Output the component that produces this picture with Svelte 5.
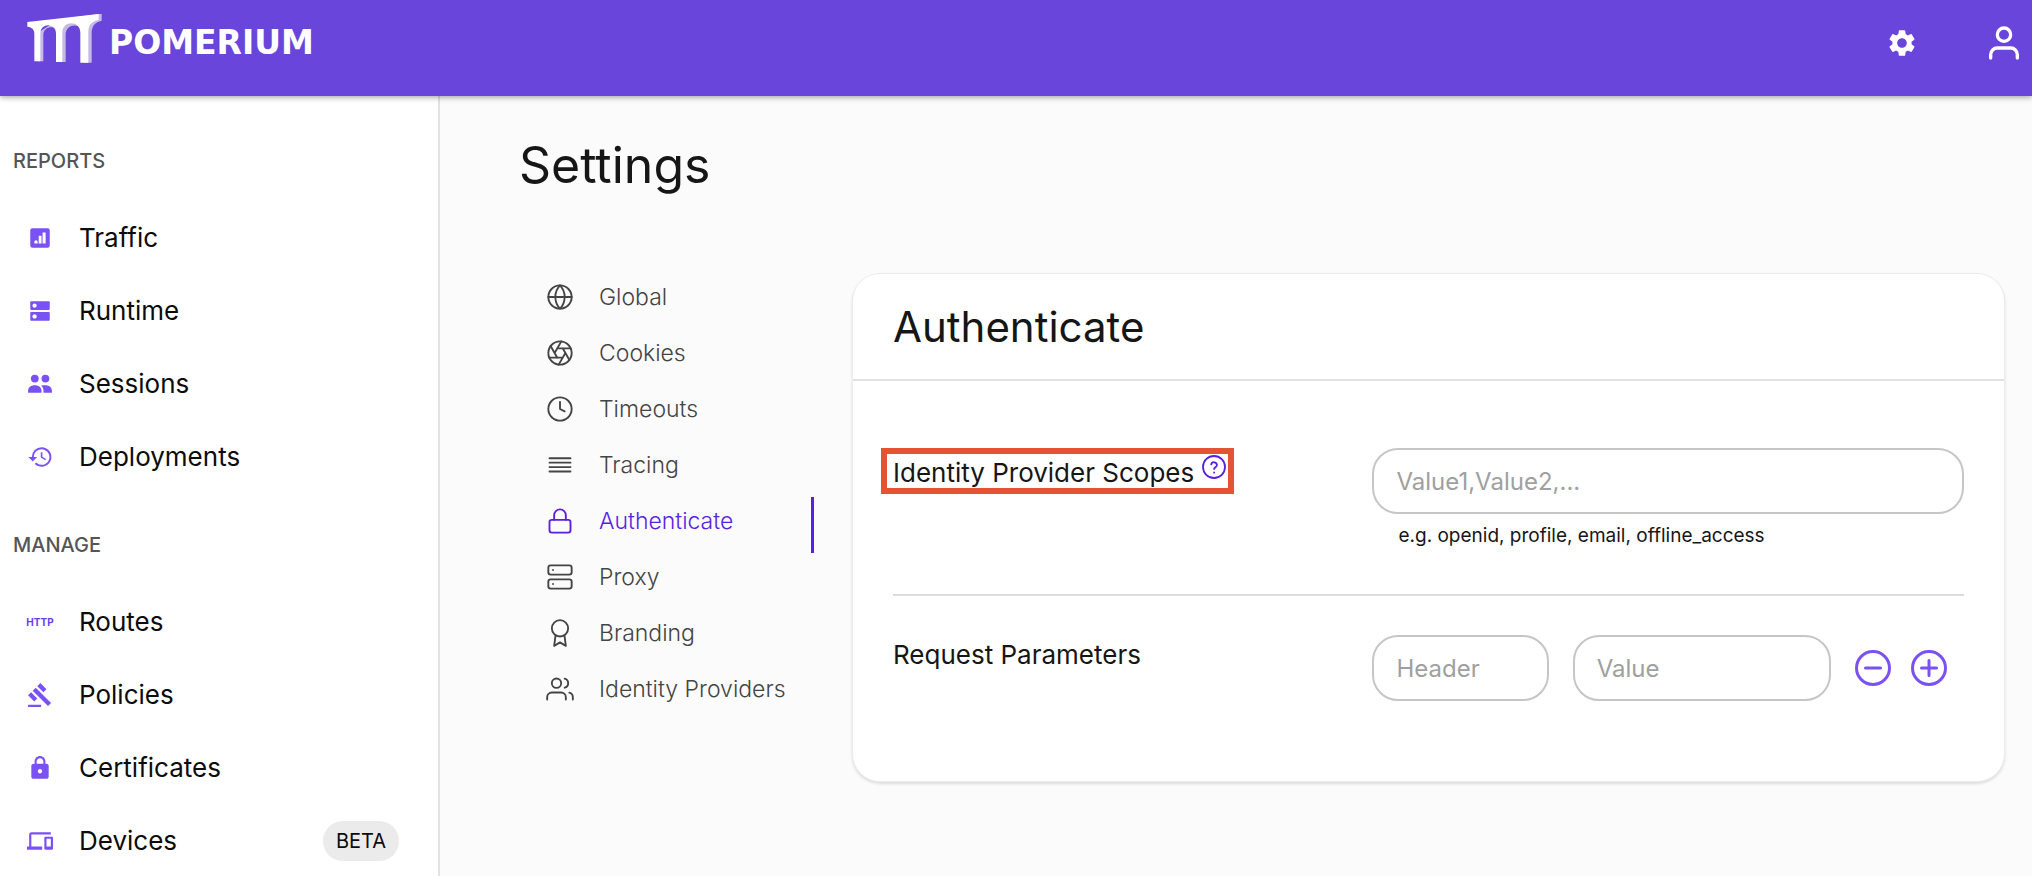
<script>
  const sections = [
    {
      title: 'REPORTS',
      items: [
        { label: 'Traffic', icon: 'traffic' },
        { label: 'Runtime', icon: 'runtime' },
        { label: 'Sessions', icon: 'sessions' },
        { label: 'Deployments', icon: 'deployments' }
      ]
    },
    {
      title: 'MANAGE',
      items: [
        { label: 'Routes', icon: 'routes' },
        { label: 'Policies', icon: 'policies' },
        { label: 'Certificates', icon: 'certificates' },
        { label: 'Devices', icon: 'devices', badge: 'BETA' }
      ]
    }
  ];

  const tabs = ['Global', 'Cookies', 'Timeouts', 'Tracing', 'Authenticate', 'Proxy', 'Branding', 'Identity Providers'];
  let active = $state('Authenticate');
  let scopes = $state('');
  let params = $state([{ header: '', value: '' }]);

  const addParam = () => params.push({ header: '', value: '' });
  const removeParam = (i) => {
    if (params.length > 1) params.splice(i, 1);
  };
</script>

{#snippet navIcon(name)}
  {#if name === 'routes'}
    <span class="http" aria-hidden="true">HTTP</span>
  {:else}
    <svg class="nav-icon" viewBox="0 0 24 24" aria-hidden="true">
      {#if name === 'traffic'}
        <path fill-rule="evenodd" d="M5 3h14a2 2 0 0 1 2 2v14a2 2 0 0 1-2 2H5a2 2 0 0 1-2-2V5a2 2 0 0 1 2-2zM8.300 14a1.500 1.500 0 0 0-1.500 1.500V17h3v-1.500A1.500 1.500 0 0 0 8.300 14zM10.800 10v7h2.600v-7zM14.400 7v10h2.800V7z" />
      {:else if name === 'runtime'}
        <path d="M20 13H4c-.55 0-1 .45-1 1v6c0 .55.45 1 1 1h16c.55 0 1-.45 1-1v-6c0-.55-.45-1-1-1zM7 19c-1.100 0-2-.9-2-2s.9-2 2-2 2 .9 2 2-.9 2-2 2zM20 3H4c-.55 0-1 .45-1 1v6c0 .55.45 1 1 1h16c.55 0 1-.45 1-1V4c0-.55-.45-1-1-1zM7 9c-1.100 0-2-.9-2-2s.9-2 2-2 2 .9 2 2-.9 2-2 2z" />
      {:else if name === 'sessions'}
        <circle cx="7.200" cy="7" r="3.600" />
        <circle cx="17" cy="7" r="3.600" />
        <path d="M1 20v-2c0-2.700 2.700-4.800 6.200-4.800s6.200 2.100 6.200 4.800v2zM15.200 20v-2c0-1.900-.9-3.500-2.200-4.600 1.200-.2 2.600-.2 4-.2 3.500 0 6 2.100 6 4.800v2z" />
      {:else if name === 'deployments'}
        <path d="M13.500 3a9 9 0 0 0-9 9H1.200l4 4 .1.150L9.400 12H6.300a7.200 7.200 0 1 1 2.100 5.100l-1.250 1.250A9 9 0 1 0 13.500 3zM12.700 7.500v5l4.200 2.500.7-1.200-3.400-2.050V7.500z" />
      {:else if name === 'policies'}
        <path d="M1 21h12v2H1zM5.245 8.070l2.830-2.827 14.140 14.142-2.828 2.828zM12.317 1l5.657 5.656-2.830 2.830-5.654-5.660zM3.825 9.485l5.657 5.657-2.828 2.828-5.657-5.657z" />
      {:else if name === 'certificates'}
        <path d="M18 8h-1V6c0-2.760-2.240-5-5-5S7 3.240 7 6v2H6c-1.100 0-2 .9-2 2v10c0 1.100.9 2 2 2h12c1.100 0 2-.9 2-2V10c0-1.100-.9-2-2-2zm-6 9c-1.100 0-2-.9-2-2s.9-2 2-2 2 .9 2 2-.9 2-2 2zm3.100-9H8.900V6c0-1.710 1.390-3.100 3.100-3.100s3.100 1.390 3.100 3.100v2z" />
      {:else if name === 'devices'}
        <path d="M4 6h18V4H4c-1.100 0-2 .9-2 2v11H0v3h14v-3H4V6zm19 2h-6c-.55 0-1 .45-1 1v10c0 .55.45 1 1 1h6c.55 0 1-.45 1-1V9c0-.55-.45-1-1-1zm-1 9h-4v-7h4v7z" />
      {/if}
    </svg>
  {/if}
{/snippet}

{#snippet tabIcon(name)}
  <svg class="tab-icon" viewBox="0 0 24 24" aria-hidden="true">
    {#if name === 'Global'}
      <circle cx="12" cy="12" r="10" />
      <path d="M2 12h20M12 2c2.600 2.700 4 6.200 4 10s-1.400 7.300-4 10c-2.600-2.700-4-6.200-4-10s1.400-7.300 4-10z" />
    {:else if name === 'Cookies'}
      <circle cx="12" cy="12" r="10" />
      <path d="M14.310 8l5.740 9.940M9.690 8h11.480M7.380 12l5.740-9.940M9.690 16L3.950 6.060M14.310 16H2.830M16.620 12l-5.740 9.940" />
    {:else if name === 'Timeouts'}
      <circle cx="12" cy="12" r="10" />
      <path d="M12 6v6l4 2" />
    {:else if name === 'Tracing'}
      <path d="M3 6.200h18M3 10h18M3 13.800h18M3 17.600h18" />
    {:else if name === 'Authenticate'}
      <rect x="3" y="11" width="18" height="11" rx="2" />
      <path d="M7 11V7a5 5 0 0 1 10 0v4" />
    {:else if name === 'Proxy'}
      <rect x="2" y="2" width="20" height="8" rx="2" />
      <rect x="2" y="14" width="20" height="8" rx="2" />
      <path d="M6 6h.01M6 18h.01" />
    {:else if name === 'Branding'}
      <circle cx="12" cy="8" r="7" />
      <path d="M8.210 13.890L7 23l5-3 5 3-1.210-9.120" />
    {:else}
      <path d="M17 21v-2a4 4 0 0 0-4-4H5a4 4 0 0 0-4 4v2M23 21v-2a4 4 0 0 0-3-3.870M16 3.130a4 4 0 0 1 0 7.750" />
      <circle cx="9" cy="7" r="4" />
    {/if}
  </svg>
{/snippet}

<div class="app">
  <header class="topbar">
    <a class="brand" href="#home">
      <svg class="mark" viewBox="0 0 228 152" aria-hidden="true">
        <path fill="#c5b9e6" d="M100 20L218 4h9v20c-20 4-30 16-30 38v88h-24V66c0-37-54-37-54 0v82H99V67c0-31-47-31-47 0v79H35V60z" />
        <path fill="#fff" d="M4 28L218 4v18c-20 4-31 14-31 36v92h-24V60c0-38-54-38-54 0v88H90V62c0-32-47-32-47 0v84H25V62c0-10-6-18-21-20z" />
      </svg>
      <span>POMERIUM</span>
    </a>
    <div class="actions">
      <button aria-label="Settings">
        <svg class="gear" viewBox="0 0 24 24"><path fill="#fff" d="M19.140 12.940c.04-.3.06-.61.06-.94 0-.32-.02-.64-.07-.94l2.030-1.580c.18-.14.23-.41.12-.61l-1.920-3.320c-.12-.22-.37-.29-.59-.22l-2.390.96c-.5-.38-1.030-.7-1.620-.94l-.36-2.540c-.04-.24-.24-.41-.48-.41h-3.840c-.24 0-.43.17-.47.41l-.36 2.540c-.59.24-1.130.57-1.620.94l-2.390-.96c-.22-.08-.47 0-.59.22L2.740 8.870c-.12.21-.08.47.12.61l2.030 1.580c-.05.3-.09.63-.09.94s.02.64.07.94l-2.030 1.580c-.18.14-.23.41-.12.61l1.920 3.320c.12.22.37.29.59.22l2.390-.96c.5.38 1.030.7 1.620.94l.36 2.540c.05.24.24.41.48.41h3.840c.24 0 .44-.17.47-.41l.36-2.540c.59-.24 1.130-.56 1.620-.94l2.390.96c.22.08.47 0 .59-.22l1.920-3.320c.12-.22.07-.47-.12-.61l-2.010-1.580zM12 15.600c-1.980 0-3.600-1.620-3.600-3.600s1.620-3.600 3.600-3.600 3.600 1.620 3.600 3.600-1.620 3.600-3.600 3.600z" /></svg>
      </button>
      <button aria-label="Account">
        <svg class="user" viewBox="0 0 24 24"><circle cx="12" cy="7" r="4" /><path d="M20 21v-2a4 4 0 0 0-4-4H8a4 4 0 0 0-4 4v2" /></svg>
      </button>
    </div>
  </header>

  <div class="body">
    <nav class="sidebar" aria-label="Main">
      {#each sections as section}
        <section>
          <h2>{section.title}</h2>
          {#each section.items as item}
            <a class="nav-item" href="#{item.icon}">
              <span class="icon-slot">{@render navIcon(item.icon)}</span>
              <span>{item.label}</span>
              {#if item.badge}<span class="badge">{item.badge}</span>{/if}
            </a>
          {/each}
        </section>
      {/each}
    </nav>

    <main>
      <h1>Settings</h1>
      <div class="columns">
        <nav class="tabs" aria-label="Settings">
          {#each tabs as tab}
            <a class="tab" class:active={active === tab} href="#{tab}" onclick={() => (active = tab)}>
              {@render tabIcon(tab)}
              <span>{tab}</span>
            </a>
          {/each}
        </nav>

        <section class="card">
          <h2>Authenticate</h2>
          <div class="fields">
            <div class="row scopes-row">
              <div class="name">
                <div class="highlight">
                  <label for="scopes">Identity Provider Scopes</label>
                  <button class="help" aria-label="Help">
                    <svg viewBox="0 0 24 24"><circle cx="12" cy="12" r="11" /><path d="M9.200 9.400a2.900 2.900 0 0 1 5.700.9c0 1.800-2.800 2.100-2.800 3.800M12.100 17.500v.2" /></svg>
                  </button>
                </div>
              </div>
              <div class="control">
                <input id="scopes" type="text" placeholder="Value1,Value2,..." bind:value={scopes} />
                <p>e.g. openid, profile, email, offline_access</p>
              </div>
            </div>

            <div class="row params-row">
              <div class="name"><span>Request Parameters</span></div>
              <div class="control">
                {#each params as param, i}
                  <div class="pair">
                    <input type="text" aria-label="Header" placeholder="Header" bind:value={param.header} />
                    <input type="text" aria-label="Value" placeholder="Value" bind:value={param.value} />
                    <div class="buttons">
                      <button aria-label="Remove parameter" onclick={() => removeParam(i)}>
                        <svg viewBox="0 0 24 24"><circle cx="12" cy="12" r="11" /><path d="M7 12h10" /></svg>
                      </button>
                      <button aria-label="Add parameter" onclick={addParam}>
                        <svg viewBox="0 0 24 24"><circle cx="12" cy="12" r="11" /><path d="M7 12h10M12 7v10" /></svg>
                      </button>
                    </div>
                  </div>
                {/each}
              </div>
            </div>
          </div>
        </section>
      </div>
    </main>
  </div>
</div>

<style>
  :global(body) {
    margin: 0;
  }
  .app {
    display: flex;
    flex-direction: column;
    height: 100vh;
    overflow: hidden;
    background: #fbfbfb;
    color: #161616;
    font-family: Inter, "Open Sans", sans-serif;
    font-size: 26px;
  }
  .app * {
    box-sizing: border-box;
  }
  a {
    color: inherit;
    text-decoration: none;
  }
  button {
    display: flex;
    padding: 0;
    border: 0;
    background: none;
    cursor: pointer;
  }
  h1,
  h2,
  p {
    margin: 0;
    font-weight: 400;
  }

  .topbar {
    position: relative;
    z-index: 1;
    flex: none;
    display: flex;
    justify-content: space-between;
    height: 96px;
    padding: 12px 8px 20px 26px;
    background: #6a45db;
    box-shadow: 0 1px 6px rgba(0, 0, 0, 0.4);
  }
  .brand {
    display: flex;
    gap: 7px;
    color: #fff;
    font: 700 33px/62px "DejaVu Sans", sans-serif;
  }
  .mark {
    width: 76px;
    height: 52px;
  }
  .actions {
    display: flex;
    align-items: center;
    gap: 66px;
    height: 62px;
  }
  .gear {
    width: 32px;
    height: 32px;
  }
  .user {
    width: 40px;
    height: 40px;
    fill: none;
    stroke: #fff;
    stroke-width: 2;
    stroke-linecap: round;
  }

  .body {
    flex: 1;
    display: flex;
    min-height: 0;
  }
  .sidebar {
    flex: none;
    display: flex;
    flex-direction: column;
    gap: 12px;
    width: 440px;
    padding-top: 25px;
    overflow: hidden;
    background: #fff;
    border-right: 2px solid #e2e2e2;
  }
  .sidebar h2 {
    padding-left: 13px;
    color: #555;
    font-size: 20px;
    font-weight: 500;
    line-height: 80px;
  }
  .nav-item {
    display: flex;
    align-items: center;
    height: 73px;
    padding: 0 39px 0 26px;
    color: #0c0c0c;
  }
  .icon-slot {
    display: flex;
    width: 53px;
  }
  .nav-icon {
    width: 28px;
    height: 26px;
    fill: #7a52f4;
  }
  .http {
    width: 28px;
    color: #6a3df0;
    font-size: 10px;
    font-weight: 700;
    text-align: center;
  }
  .badge {
    margin-left: auto;
    padding: 0 13px;
    border-radius: 20px;
    background: #ebebeb;
    font-size: 20px;
    line-height: 40px;
  }

  main {
    flex: 1;
    min-width: 0;
    padding: 36px 27px 0 79px;
  }
  h1 {
    font-size: 50px;
    line-height: 66px;
  }
  .columns {
    display: flex;
    align-items: flex-start;
    gap: 38px;
    margin-top: 75px;
  }
  .tabs {
    flex: none;
    width: 295px;
  }
  .tab {
    display: flex;
    align-items: center;
    gap: 25px;
    height: 56px;
    padding: 0 0 8px 27px;
    border-right: 3px solid transparent;
    color: #444;
    font-size: 23px;
    font-weight: 300;
  }
  .tab.active {
    border-color: #5a1fe0;
    color: #5a1fe0;
  }
  .tab-icon {
    width: 28px;
    height: 28px;
    fill: none;
    stroke: currentColor;
    stroke-width: 1.6;
    stroke-linecap: round;
    stroke-linejoin: round;
  }

  .card {
    flex: 1;
    min-width: 0;
    background: #fff;
    border: 1px solid #ececec;
    border-radius: 28px;
    box-shadow: 0 2px 3px rgba(0, 0, 0, 0.12);
  }
  .card h2 {
    padding: 0 40px;
    border-bottom: 2px solid #e2e2e2;
    font-size: 42px;
    line-height: 105px;
  }
  .fields {
    padding: 67px 40px 80px;
  }
  .row {
    display: grid;
    grid-template-columns: 479fr 591fr;
  }
  .scopes-row {
    padding-bottom: 44px;
    border-bottom: 2px solid #dcdcdc;
  }
  .params-row {
    padding-top: 39px;
  }
  .name {
    line-height: 40px;
  }
  .highlight {
    display: inline-flex;
    align-items: flex-start;
    gap: 8px;
    height: 46px;
    margin-left: -12px;
    padding: 0 2px 0 6px;
    border: 6px solid #e15533;
    line-height: 38px;
  }
  .help {
    margin-top: 1px;
  }
  .help svg {
    width: 24px;
    height: 24px;
    fill: none;
    stroke: #5a1fe0;
    stroke-width: 1.8;
    stroke-linecap: round;
  }
  input {
    width: 100%;
    min-width: 0;
    height: 66px;
    padding: 0 22px;
    border: 2px solid #c6c6c6;
    border-radius: 26px;
    background: #fff;
    color: inherit;
    font: inherit;
    font-size: 24px;
  }
  input::placeholder {
    color: #a0a0a0;
    opacity: 1;
  }
  p {
    padding: 8px 26px 0;
    font-size: 19px;
    line-height: 28px;
  }
  .pair {
    display: grid;
    grid-template-columns: 176fr 258fr 109px;
    column-gap: 24px;
  }
  .buttons {
    display: flex;
    align-items: center;
    gap: 20px;
  }
  .buttons svg {
    width: 36px;
    height: 36px;
    fill: none;
    stroke: #7a52f4;
    stroke-width: 2;
    stroke-linecap: round;
  }
</style>
